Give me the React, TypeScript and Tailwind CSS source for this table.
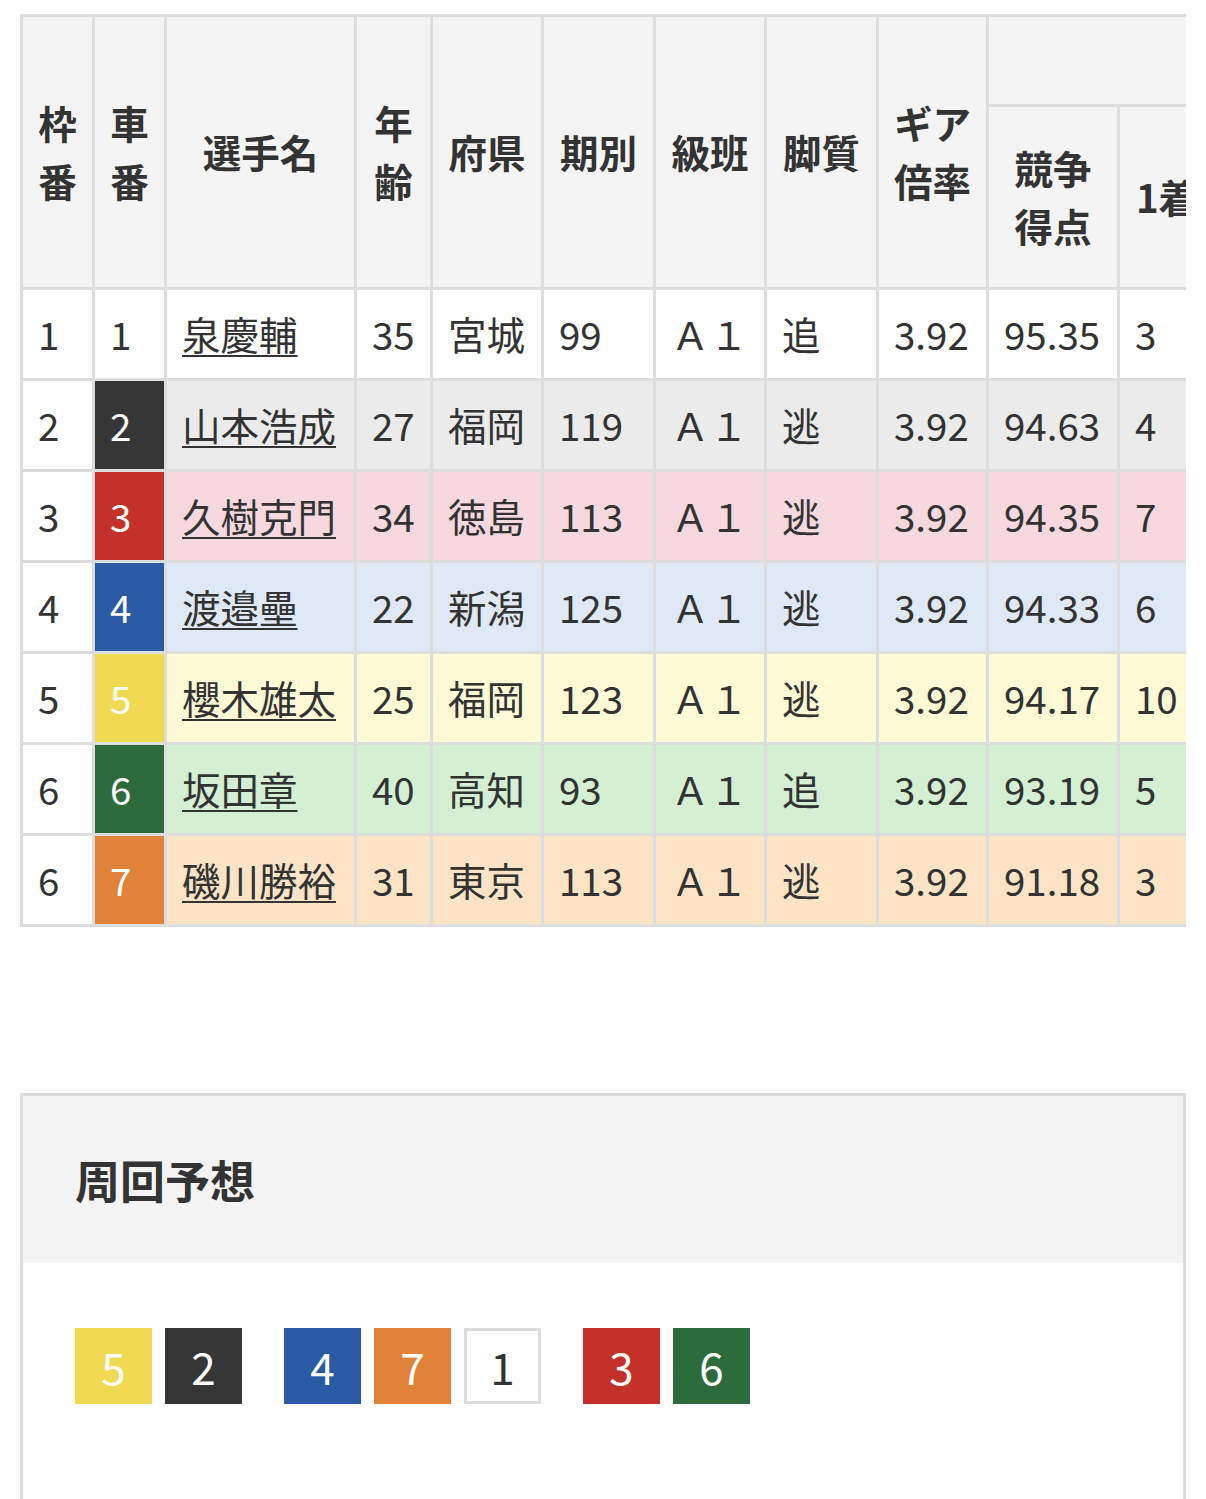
import React from "react";

type Row = {
  waku: string;
  sha: string;
  name: string;
  age: string;
  pref: string;
  ki: string;
  kyaku: string;
  score: string;
  first: string;
  rowBg: string;
  chip: string;
};

const rows: Row[] = [
  { waku: "1", sha: "1", name: "泉慶輔", age: "35", pref: "宮城", ki: "99", kyaku: "追", score: "95.35", first: "3", rowBg: "bg-white", chip: "bg-white text-[#333]" },
  { waku: "2", sha: "2", name: "山本浩成", age: "27", pref: "福岡", ki: "119", kyaku: "逃", score: "94.63", first: "4", rowBg: "bg-[#ebebeb]", chip: "bg-[#363636] text-white" },
  { waku: "3", sha: "3", name: "久樹克門", age: "34", pref: "徳島", ki: "113", kyaku: "逃", score: "94.35", first: "7", rowBg: "bg-[#f6d8df]", chip: "bg-[#c4302a] text-white" },
  { waku: "4", sha: "4", name: "渡邉壘", age: "22", pref: "新潟", ki: "125", kyaku: "逃", score: "94.33", first: "6", rowBg: "bg-[#dfe9f5]", chip: "bg-[#2a5aa3] text-white" },
  { waku: "5", sha: "5", name: "櫻木雄太", age: "25", pref: "福岡", ki: "123", kyaku: "逃", score: "94.17", first: "10", rowBg: "bg-[#fffad6]", chip: "bg-[#f0da52] text-white" },
  { waku: "6", sha: "6", name: "坂田章", age: "40", pref: "高知", ki: "93", kyaku: "追", score: "93.19", first: "5", rowBg: "bg-[#d4efd3]", chip: "bg-[#2d6a3c] text-white" },
  { waku: "6", sha: "7", name: "磯川勝裕", age: "31", pref: "東京", ki: "113", kyaku: "逃", score: "91.18", first: "3", rowBg: "bg-[#fbe4c6]", chip: "bg-[#e0823a] text-white" },
];

const th = "border-r-[3px] border-b-[3px] border-[#ddd] bg-[#f4f4f4] font-bold text-center align-middle px-[8px] leading-[1.5]";
const td = "border-r-[3px] border-b-[3px] border-[#ddd] align-middle text-left px-[15px] whitespace-nowrap";

type Chip = { n: string; cls: string };
const groups: Chip[][] = [
  [
    { n: "5", cls: "bg-[#f0da52] text-white" },
    { n: "2", cls: "bg-[#363636] text-white" },
  ],
  [
    { n: "4", cls: "bg-[#2a5aa3] text-white" },
    { n: "7", cls: "bg-[#e0823a] text-white" },
    { n: "1", cls: "bg-white text-[#333] border-[3px] border-[#ddd]" },
  ],
  [
    { n: "3", cls: "bg-[#c4302a] text-white" },
    { n: "6", cls: "bg-[#2d6a3c] text-white" },
  ],
];

export default function App() {
  return (
    <div className="h-[1499px] overflow-hidden bg-white text-[#333] font-['Noto_Sans_CJK_JP','Noto_Sans',sans-serif]">
      <div className="mx-[20px] mt-[14px] overflow-hidden">
        <table className="table-fixed border-separate border-spacing-0 border-l-[3px] border-t-[3px] border-[#ddd] w-[1483px] text-[38.5px]">
          <colgroup>
            <col className="w-[72px]" />
            <col className="w-[72px]" />
            <col className="w-[190px]" />
            <col className="w-[76px]" />
            <col className="w-[111px]" />
            <col className="w-[112px]" />
            <col className="w-[111px]" />
            <col className="w-[112px]" />
            <col className="w-[110px]" />
            <col className="w-[131px]" />
            <col className="w-[96px]" />
            <col className="w-[96px]" />
            <col className="w-[96px]" />
            <col className="w-[96px]" />
          </colgroup>
          <thead>
            <tr className="h-[90px]">
              <th rowSpan={2} className={th}>枠<br />番</th>
              <th rowSpan={2} className={th}>車<br />番</th>
              <th rowSpan={2} className={th}>選手名</th>
              <th rowSpan={2} className={th}>年<br />齢</th>
              <th rowSpan={2} className={th}>府県</th>
              <th rowSpan={2} className={th}>期別</th>
              <th rowSpan={2} className={th}>級班</th>
              <th rowSpan={2} className={th}>脚質</th>
              <th rowSpan={2} className={th}>ギア<br />倍率</th>
              <th colSpan={5} className={th}>成績</th>
            </tr>
            <tr className="h-[183px]">
              <th className={th}>競争<br />得点</th>
              <th className={th}>1着</th>
              <th className={th}>2着</th>
              <th className={th}>3着</th>
              <th className={th}>着外</th>
            </tr>
          </thead>
          <tbody>
            {rows.map((r, i) => (
              <tr key={i} className={`h-[91px] ${r.rowBg}`}>
                <td className={`${td} bg-white`}>{r.waku}</td>
                <td className={`${td} ${r.chip}`}>{r.sha}</td>
                <td className={td}>
                  <a className="underline decoration-[2px] underline-offset-[5px] text-[#333]">{r.name}</a>
                </td>
                <td className={td}>{r.age}</td>
                <td className={td}>{r.pref}</td>
                <td className={td}>{r.ki}</td>
                <td className={td}>Ａ１</td>
                <td className={td}>{r.kyaku}</td>
                <td className={td}>3.92</td>
                <td className={td}>{r.score}</td>
                <td className={td}>{r.first}</td>
                <td className={td}>0</td>
                <td className={td}>0</td>
                <td className={td}>0</td>
              </tr>
            ))}
          </tbody>
        </table>
      </div>

      <div className="mx-[20px] mt-[166px] border-[3px] border-[#ddd] h-[500px]">
        <div className="h-[167px] bg-[#f4f4f4] flex items-center pl-[52px]">
          <h2 className="text-[45px] font-bold leading-none">周回予想</h2>
        </div>
        <div className="pt-[65px] pl-[52px] flex gap-[42px]">
          {groups.map((g, gi) => (
            <div key={gi} className="flex gap-[13px]">
              {g.map((c, ci) => (
                <div key={ci} className={`w-[77px] h-[76px] flex items-center justify-center text-[44px] leading-none ${c.cls}`}>
                  {c.n}
                </div>
              ))}
            </div>
          ))}
        </div>
      </div>
    </div>
  );
}
